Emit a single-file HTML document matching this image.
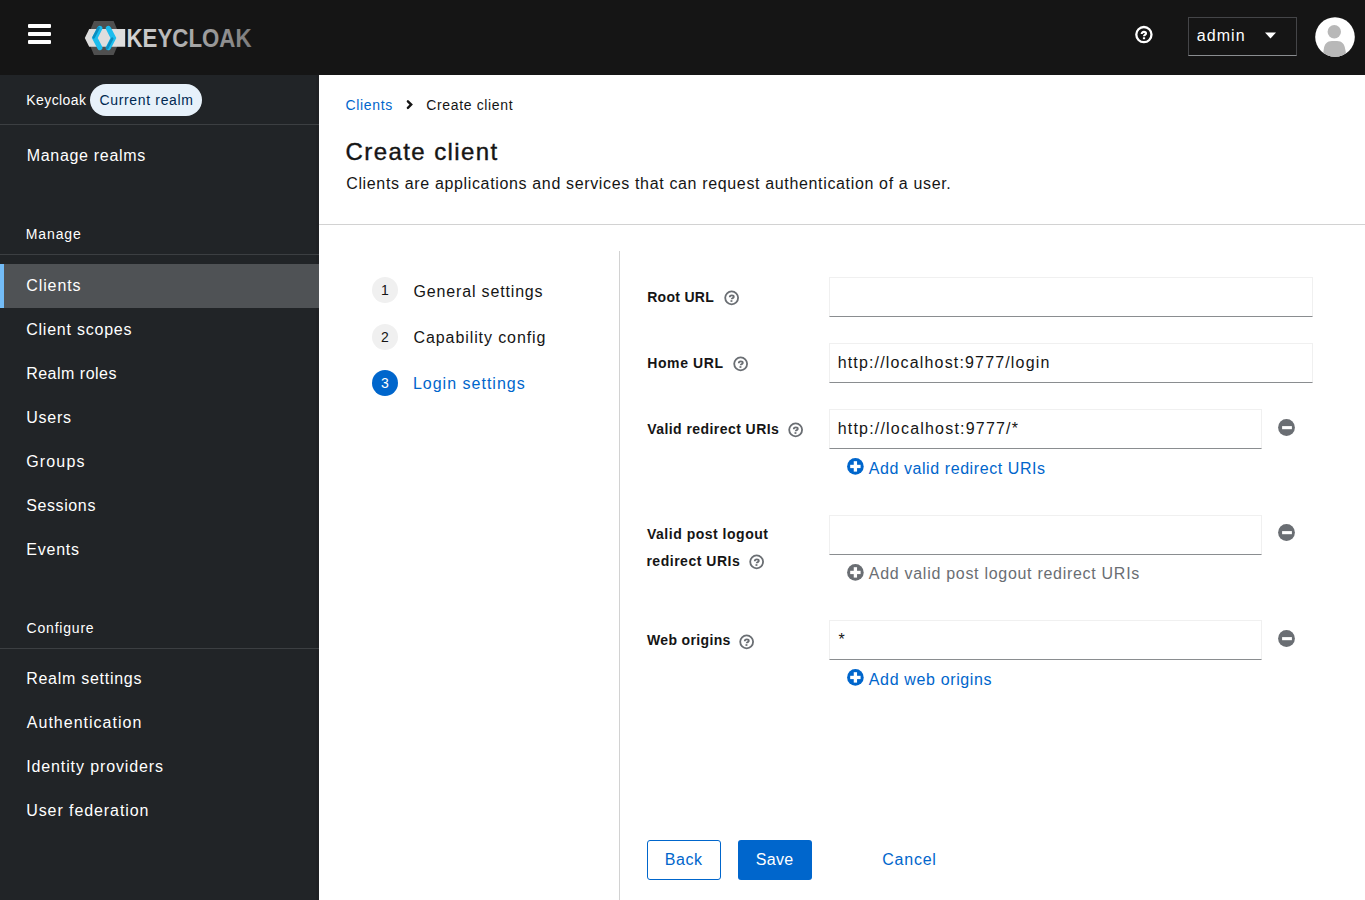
<!DOCTYPE html>
<html><head><meta charset="utf-8">
<style>
html,body{margin:0;padding:0;width:1365px;height:900px;overflow:hidden;background:#fff;font-family:"Liberation Sans",sans-serif;}
.a{position:absolute;}
.t{position:absolute;white-space:nowrap;font-family:"Liberation Sans",sans-serif;}
#hdr{left:0;top:0;width:1365px;height:75px;background:#151515;}
#side{left:0;top:75px;width:319px;height:825px;background:#212427;}
.dv{position:absolute;height:1px;background:#3c3f42;}
.bar{position:absolute;left:28px;width:23px;height:4px;background:#fff;border-radius:1px;}
.inp{position:absolute;left:829px;height:38px;border:1px solid #f0f0f0;border-bottom-color:#8a8d90;background:#fff;box-sizing:content-box;}
.circ{position:absolute;left:372px;width:26px;height:26px;border-radius:50%;background:#f0f0f0;color:#151515;font-size:14px;line-height:26px;text-align:center;}
</style></head>
<body>
<div id="hdr" class="a"></div>
<div class="bar" style="top:24px"></div>
<div class="bar" style="top:32px"></div>
<div class="bar" style="top:40px"></div>

<svg class="a" style="left:80px;top:15px" width="180" height="45" viewBox="80 15 180 45">
 <defs>
  <linearGradient id="kg" x1="127" y1="0" x2="252" y2="0" gradientUnits="userSpaceOnUse">
   <stop offset="0" stop-color="#d6d6d6"/><stop offset="1" stop-color="#7c7c7c"/>
  </linearGradient>
 </defs>
 <polygon points="94,21 113.6,21 120.8,38 113.6,55 94,55 86.8,38" fill="#4f4f4f"/>
 <polygon points="89.2,29 125.2,29 125.2,46.8 89.2,46.8 84.8,37.9" fill="#dedede"/>
 <polyline points="99.8,28.4 94.8,38 99.8,47.6" fill="none" stroke="#1cbdee" stroke-width="5.2" stroke-linecap="round" stroke-linejoin="miter"/>
 <polyline points="99.8,28.4 94.8,38" fill="none" stroke="#0b8ec0" stroke-width="2.6" stroke-linecap="round" transform="translate(-1.2,-0.6)"/>
 <polyline points="108.4,28.4 113.4,38 108.4,47.6" fill="none" stroke="#1cbdee" stroke-width="5.2" stroke-linecap="round" stroke-linejoin="miter"/>
 <polyline points="113.4,38 108.4,47.6" fill="none" stroke="#0b8ec0" stroke-width="2.6" stroke-linecap="round" transform="translate(-1.2,0.6)"/>
 <text x="126.5" y="46.9" font-family="Liberation Sans" font-weight="bold" font-size="25" textLength="125" lengthAdjust="spacingAndGlyphs" fill="url(#kg)">KEYCLOAK</text>
</svg>

<!-- header right -->
<svg class="a" style="left:1134px;top:25px" width="20" height="20" viewBox="0 0 20 20">
 <circle cx="9.9" cy="9.6" r="7.6" fill="none" stroke="#fff" stroke-width="2.3"/>
 <path d="M7.7,9.0 C7.7,7.6 8.6,6.9 9.9,6.9 C11.2,6.9 12.0,7.6 12.0,8.6 C12.0,9.9 10.0,9.9 10.0,11.2" fill="none" stroke="#fff" stroke-width="2.1"/>
 <rect x="8.9" y="12.3" width="2.2" height="1.9" fill="#fff"/>
</svg>
<div class="a" style="left:1188px;top:17px;width:107px;height:37px;border:1px solid #444548;border-bottom-color:#8a8d90;"></div>
<svg class="a" style="left:1264px;top:31px" width="14" height="9" viewBox="0 0 14 9">
 <polygon points="1,1.5 12,1.5 6.5,7.5" fill="#fff"/>
</svg>
<svg class="a" style="left:1314px;top:16px" width="42" height="42" viewBox="0 0 42 42">
 <defs><clipPath id="av"><circle cx="21" cy="21" r="19.8"/></clipPath></defs>
 <circle cx="21" cy="21" r="19.8" fill="#fff"/>
 <g clip-path="url(#av)">
  <circle cx="20.3" cy="15.7" r="6.7" fill="#b8b8b8"/>
  <path d="M8.5,42 L9.8,33 C10.4,28 13,25 18,25 L23,25 C28,25 30.6,28 31.2,33 L32.8,42 Z" fill="#b8b8b8"/>
 </g>
</svg>

<!-- sidebar -->
<div id="side" class="a"></div>
<div class="a" style="left:316px;top:75px;width:3px;height:825px;background:#1f2124"></div>
<div class="a" style="left:90px;top:84px;width:112px;height:32px;border-radius:16px;background:#e7f1fa;"></div>
<div class="dv" style="left:0;top:124px;width:319px"></div>
<div class="dv" style="left:0;top:254px;width:319px"></div>
<div class="a" style="left:0;top:264px;width:319px;height:44px;background:#4f5255"></div>
<div class="a" style="left:0;top:264px;width:4px;height:44px;background:#73bcf7"></div>
<div class="dv" style="left:0;top:648px;width:319px"></div>

<!-- main -->
<svg class="a" style="left:404px;top:99px" width="12" height="12" viewBox="0 0 12 12">
 <polyline points="3.9,2.3 7.2,5.6 3.9,8.9" fill="none" stroke="#151515" stroke-width="2.4" stroke-linecap="round"/>
</svg>
<div class="a" style="left:319px;top:224px;width:1046px;height:1px;background:#d2d2d2"></div>
<div class="a" style="left:619px;top:251px;width:1px;height:649px;background:#d2d2d2"></div>

<div class="circ" style="top:277px">1</div>
<div class="circ" style="top:324px">2</div>
<div class="circ" style="top:370px;background:#0066cc;color:#fff">3</div>

<!-- help icons -->
<svg width="0" height="0" style="position:absolute">
 <defs>
  <g id="hq" transform="translate(-0.55,0.27)">
   <circle cx="8.2" cy="7.6" r="6.45" fill="none" stroke="#6a6e73" stroke-width="1.8"/>
   <path d="M6.3,7.0 C6.3,5.9 7.2,5.2 8.35,5.2 C9.5,5.2 10.35,5.9 10.35,6.7 C10.35,7.8 8.2,7.9 8.2,9.0" fill="none" stroke="#6a6e73" stroke-width="1.8"/>
   <rect x="7.05" y="9.9" width="1.9" height="1.7" fill="#6a6e73"/>
  </g>
  <g id="minus">
   <circle cx="8.5" cy="8.5" r="8.4" fill="#6a6e73"/>
   <rect x="4.1" y="7.1" width="9.8" height="3.1" fill="#fff"/>
  </g>
 </defs>
</svg>
<svg class="a" style="left:723.5px;top:290px" width="16" height="16"><use href="#hq"/></svg>
<svg class="a" style="left:732.5px;top:356px" width="16" height="16"><use href="#hq"/></svg>
<svg class="a" style="left:787.5px;top:422px" width="16" height="16"><use href="#hq"/></svg>
<svg class="a" style="left:748.5px;top:554px" width="16" height="16"><use href="#hq"/></svg>
<svg class="a" style="left:738.7px;top:633.6px" width="16" height="16"><use href="#hq"/></svg>

<!-- inputs -->
<div class="inp" style="top:277px;width:482px"></div>
<div class="inp" style="top:343px;width:482px"></div>
<div class="inp" style="top:409px;width:431px"></div>
<div class="inp" style="top:515px;width:431px"></div>
<div class="inp" style="top:620px;width:431px"></div>

<svg class="a" style="left:1278.2px;top:418.9px" width="17" height="17"><use href="#minus"/></svg>
<svg class="a" style="left:1278.2px;top:524.3px" width="17" height="17"><use href="#minus"/></svg>
<svg class="a" style="left:1278.2px;top:630px" width="17" height="17"><use href="#minus"/></svg>

<!-- plus icons -->
<svg class="a" style="left:847.3px;top:458.2px" width="17" height="17" viewBox="0 0 17 17">
 <circle cx="8.4" cy="8.4" r="8.3" fill="#0066cc"/>
 <rect x="3.2" y="6.8" width="10.4" height="3.3" fill="#fff"/><rect x="6.75" y="3.2" width="3.3" height="10.4" fill="#fff"/>
</svg>
<svg class="a" style="left:847.3px;top:564.3px" width="17" height="17" viewBox="0 0 17 17">
 <circle cx="8.4" cy="8.4" r="8.3" fill="#6a6e73"/>
 <rect x="3.2" y="6.8" width="10.4" height="3.3" fill="#fff"/><rect x="6.75" y="3.2" width="3.3" height="10.4" fill="#fff"/>
</svg>
<svg class="a" style="left:847.3px;top:669.3px" width="17" height="17" viewBox="0 0 17 17">
 <circle cx="8.4" cy="8.4" r="8.3" fill="#0066cc"/>
 <rect x="3.2" y="6.8" width="10.4" height="3.3" fill="#fff"/><rect x="6.75" y="3.2" width="3.3" height="10.4" fill="#fff"/>
</svg>
<div class="t" style="left:838.5px;top:630px;font-size:16px;line-height:20px;color:#151515">*</div>

<!-- buttons -->
<div class="a" style="left:647px;top:840px;width:72px;height:38px;border:1px solid #0066cc;border-radius:3px;"></div>
<div class="a" style="left:738px;top:840px;width:74px;height:40px;background:#0066cc;border-radius:3px;"></div>

<div class="t" style="left:26.2px;top:90px;font-size:14px;line-height:20px;color:#ffffff;letter-spacing:0.44px">Keycloak</div>
<div class="t" style="left:99.5px;top:90px;font-size:14px;line-height:20px;color:#002952;letter-spacing:0.66px">Current realm</div>
<div class="t" style="left:26.7px;top:146px;font-size:16px;line-height:20px;color:#ffffff;letter-spacing:0.69px">Manage realms</div>
<div class="t" style="left:25.7px;top:224px;font-size:14px;line-height:20px;color:#ffffff;letter-spacing:0.91px">Manage</div>
<div class="t" style="left:26.2px;top:276px;font-size:16px;line-height:20px;color:#ffffff;letter-spacing:0.92px">Clients</div>
<div class="t" style="left:26.2px;top:320px;font-size:16px;line-height:20px;color:#ffffff;letter-spacing:0.77px">Client scopes</div>
<div class="t" style="left:26.2px;top:364px;font-size:16px;line-height:20px;color:#ffffff;letter-spacing:0.49px">Realm roles</div>
<div class="t" style="left:26.2px;top:408px;font-size:16px;line-height:20px;color:#ffffff;letter-spacing:0.75px">Users</div>
<div class="t" style="left:26.2px;top:452px;font-size:16px;line-height:20px;color:#ffffff;letter-spacing:1.17px">Groups</div>
<div class="t" style="left:26.2px;top:496px;font-size:16px;line-height:20px;color:#ffffff;letter-spacing:0.61px">Sessions</div>
<div class="t" style="left:26.2px;top:540px;font-size:16px;line-height:20px;color:#ffffff;letter-spacing:0.80px">Events</div>
<div class="t" style="left:26.6px;top:618px;font-size:14px;line-height:20px;color:#ffffff;letter-spacing:0.79px">Configure</div>
<div class="t" style="left:26.2px;top:669px;font-size:16px;line-height:20px;color:#ffffff;letter-spacing:0.73px">Realm settings</div>
<div class="t" style="left:26.8px;top:713px;font-size:16px;line-height:20px;color:#ffffff;letter-spacing:1.01px">Authentication</div>
<div class="t" style="left:26.2px;top:757px;font-size:16px;line-height:20px;color:#ffffff;letter-spacing:0.88px">Identity providers</div>
<div class="t" style="left:26.2px;top:801px;font-size:16px;line-height:20px;color:#ffffff;letter-spacing:0.92px">User federation</div>
<div class="t" style="left:1196.8px;top:26px;font-size:16px;line-height:20px;color:#ffffff;letter-spacing:1.04px">admin</div>
<div class="t" style="left:345.5px;top:95px;font-size:14px;line-height:20px;color:#0066cc;letter-spacing:0.68px">Clients</div>
<div class="t" style="left:426.3px;top:95px;font-size:14px;line-height:20px;color:#151515;letter-spacing:0.64px">Create client</div>
<div class="t" style="left:345.6px;top:137px;font-size:24px;line-height:30px;color:#151515;letter-spacing:1.41px;-webkit-text-stroke:0.4px #151515">Create client</div>
<div class="t" style="left:346.2px;top:174px;font-size:16px;line-height:20px;color:#151515;letter-spacing:0.65px">Clients are applications and services that can request authentication of a user.</div>
<div class="t" style="left:413.5px;top:282px;font-size:16px;line-height:20px;color:#151515;letter-spacing:0.84px">General settings</div>
<div class="t" style="left:413.5px;top:328px;font-size:16px;line-height:20px;color:#151515;letter-spacing:0.91px">Capability config</div>
<div class="t" style="left:412.9px;top:374px;font-size:16px;line-height:20px;color:#0066cc;letter-spacing:1.01px">Login settings</div>
<div class="t" style="left:647.2px;top:287px;font-size:14px;line-height:20px;color:#151515;letter-spacing:0.30px;font-weight:bold">Root URL</div>
<div class="t" style="left:647.2px;top:353px;font-size:14px;line-height:20px;color:#151515;letter-spacing:0.63px;font-weight:bold">Home URL</div>
<div class="t" style="left:647.2px;top:419px;font-size:14px;line-height:20px;color:#151515;letter-spacing:0.44px;font-weight:bold">Valid redirect URIs</div>
<div class="t" style="left:647.0px;top:524px;font-size:14px;line-height:20px;color:#151515;letter-spacing:0.51px;font-weight:bold">Valid post logout</div>
<div class="t" style="left:646.4px;top:551px;font-size:14px;line-height:20px;color:#151515;letter-spacing:0.52px;font-weight:bold">redirect URIs</div>
<div class="t" style="left:647.0px;top:630px;font-size:14px;line-height:20px;color:#151515;letter-spacing:0.35px;font-weight:bold">Web origins</div>
<div class="t" style="left:837.7px;top:353px;font-size:16px;line-height:20px;color:#151515;letter-spacing:1.16px">http://localhost:9777/login</div>
<div class="t" style="left:837.7px;top:419px;font-size:16px;line-height:20px;color:#151515;letter-spacing:1.20px">http://localhost:9777/*</div>
<div class="t" style="left:868.7px;top:459px;font-size:16px;line-height:20px;color:#0066cc;letter-spacing:0.58px">Add valid redirect URIs</div>
<div class="t" style="left:868.8px;top:564px;font-size:16px;line-height:20px;color:#6a6e73;letter-spacing:0.71px">Add valid post logout redirect URIs</div>
<div class="t" style="left:868.8px;top:670px;font-size:16px;line-height:20px;color:#0066cc;letter-spacing:0.64px">Add web origins</div>
<div class="t" style="left:664.7px;top:850px;font-size:16px;line-height:20px;color:#0066cc;letter-spacing:0.59px">Back</div>
<div class="t" style="left:755.7px;top:850px;font-size:16px;line-height:20px;color:#ffffff;letter-spacing:0.36px">Save</div>
<div class="t" style="left:882.2px;top:850px;font-size:16px;line-height:20px;color:#0066cc;letter-spacing:0.78px">Cancel</div>
</body></html>
